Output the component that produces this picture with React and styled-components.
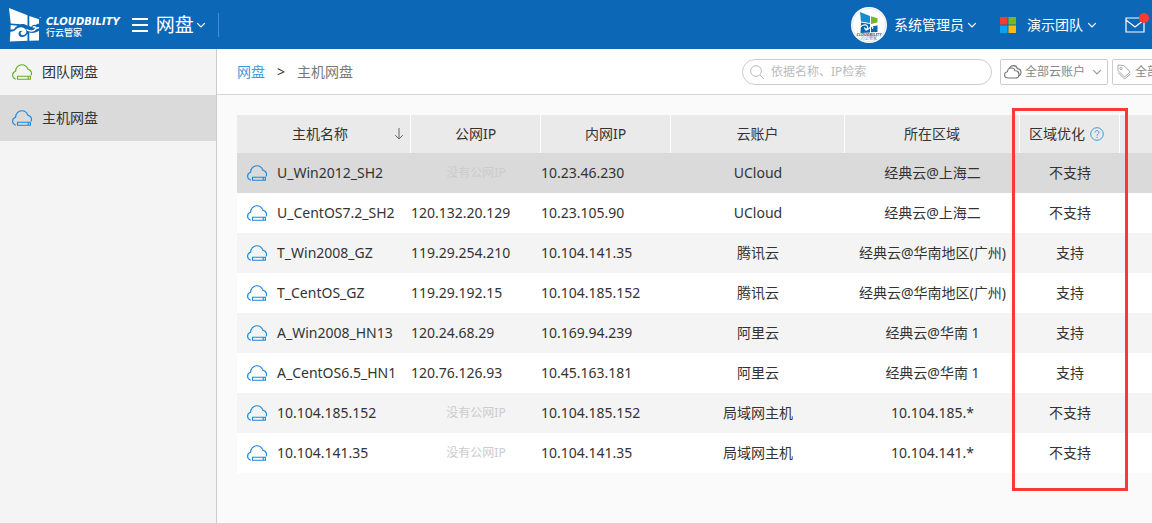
import React from 'react';
import styled, { createGlobalStyle } from 'styled-components';

const GlobalStyles = createGlobalStyle`
  * {
    box-sizing: border-box;
  }
  body {
    margin: 0;
    background: #fafafa;
    color: #333;
    font-family: 'Noto Sans', 'Noto Sans CJK SC', sans-serif;
    font-size: 14px;
    line-height: 20px;
  }
  button, input, select {
    font: inherit;
    color: inherit;
  }
  button {
    padding: 0;
    border: 0;
    background: none;
  }
  a {
    color: inherit;
    text-decoration: none;
  }
  svg {
    flex: none;
    display: block;
    fill: none;
    stroke: currentColor;
  }
  svg.solid {
    stroke: none;
  }
`;

const Page = styled.div`
  min-height: 100vh;
  display: flex;
  flex-direction: column;
  overflow: hidden;
`;

const Header = styled.header`
  height: 49px;
  padding: 0 3px 0 8px;
  display: flex;
  align-items: center;
  background: #0c67b7;
  color: white;
`;

const Brand = styled.a`
  display: flex;
  align-items: center;
  gap: 5px;
`;

const BrandText = styled.span`
  display: flex;
  flex-direction: column;
  padding-top: 6px;
  .latin {
    font-family: 'DejaVu Sans', sans-serif;
    font-size: 10px;
    font-style: italic;
    font-weight: 700;
    line-height: 10px;
  }
  .chinese {
    font-size: 9px;
    font-weight: 500;
    line-height: 12px;
  }
`;

const ModuleButton = styled.button`
  height: 24px;
  margin-left: 12px;
  padding-right: 12px;
  display: flex;
  align-items: center;
  border-right: 1px solid #4a90d0;
  font-size: 19px;
  span {
    margin: 0 2px 0 8px;
  }
`;

const HeaderActions = styled.div`
  margin-left: auto;
  display: flex;
  align-items: center;
`;

const MenuButton = styled.button`
  display: flex;
  align-items: center;
  gap: ${(props) => props.$gap};
  margin-right: ${(props) => props.$space};
  .arrow {
    margin-left: ${(props) => props.$arrow};
  }
`;

const MailButton = styled.button`
  position: relative;
  padding-right: 4px;
  .dot {
    position: absolute;
    top: -4px;
    right: 0;
    width: 10px;
    height: 10px;
    border-radius: 50%;
    background: #ff3b30;
  }
`;

const Body = styled.div`
  flex: 1;
  min-width: 1240px;
  display: flex;
`;

const Sidebar = styled.nav`
  width: 217px;
  flex: none;
  border-right: 1px solid #ccc;
  background: #f4f4f4;
`;

const SideLink = styled.a`
  height: 46px;
  padding-left: 12px;
  display: flex;
  align-items: center;
  gap: 10px;
  background: ${(props) => (props.$active ? '#dadada' : 'transparent')};
  svg {
    color: ${(props) => props.$color};
  }
`;

const Main = styled.main`
  flex: 1;
`;

const Toolbar = styled.div`
  height: 46px;
  padding: 0 20px;
  display: flex;
  align-items: center;
  border-bottom: 1px solid #d6d6d6;
  background: white;
`;

const Breadcrumb = styled.div`
  flex: 1;
  display: flex;
  gap: 12px;
  color: #777;
  a {
    color: #429ade;
  }
  .separator {
    color: #333;
  }
`;

const Search = styled.label`
  width: 250px;
  height: 26px;
  margin-right: 8px;
  padding: 0 7px;
  display: flex;
  align-items: center;
  gap: 7px;
  border: 1px solid #ccc;
  border-radius: 13px;
  color: #bbb;
  font-size: 12px;
  input {
    flex: 1;
    min-width: 0;
    padding: 0;
    border: 0;
    outline: 0;
    background: none;
  }
  input::placeholder {
    color: #bbb;
  }
`;

const Filter = styled.label`
  width: 108px;
  height: 26px;
  margin-right: ${(props) => props.$space || '0'};
  padding: 0 5px 0 3px;
  display: flex;
  align-items: center;
  gap: 3px;
  border: 1px solid #ccc;
  border-radius: 2px;
  color: ${(props) => props.$color};
  font-size: 12px;
  select {
    flex: 1;
    min-width: 0;
    padding: 0;
    appearance: none;
    border: 0;
    outline: 0;
    background: none;
    color: #888;
  }
  .arrow {
    color: #999;
  }
`;

const TableArea = styled.div`
  position: relative;
  margin: 20px 0 0 20px;
`;

const HostTable = styled.table`
  width: 100%;
  table-layout: fixed;
  border-collapse: separate;
  border-spacing: 0;
  white-space: nowrap;
  th, td {
    padding: 0;
    font-weight: 400;
    text-align: center;
  }
  th {
    height: 38px;
    background: #eaeaea;
    border-right: 1px solid white;
  }
`;

const HeadCell = styled.div`
  display: flex;
  align-items: center;
  justify-content: center;
  gap: 5px;
  padding-right: 6px;
  svg {
    color: ${(props) => props.$color};
  }
  span {
    flex: ${(props) => (props.$fill ? 1 : 'none')};
    padding-left: ${(props) => (props.$fill ? '14px' : 0)};
  }
`;

const HostRow = styled.tr`
  height: 40px;
  background: ${(props) => (props.$selected ? '#dadada' : 'white')};
  &:nth-child(odd) {
    background: ${(props) => (props.$selected ? '#dadada' : '#f4f4f4')};
  }
  td.ip {
    text-align: left;
  }
`;

const HostName = styled.div`
  padding-left: 10px;
  display: flex;
  align-items: center;
  gap: 10px;
  svg {
    color: #1b87dc;
  }
`;

const NoIp = styled.div`
  color: #ccc;
  font-size: 12px;
  text-align: center;
`;

const HelpButton = styled.button`
  color: #429ade;
`;

const Highlight = styled.div`
  position: absolute;
  top: -7px;
  bottom: -18px;
  left: 775px;
  width: 116px;
  border: 3px solid #fa3838;
  pointer-events: none;
`;

function CloudDisk() {
  return (
    <svg width="20" height="16" viewBox="0 0 20 16" strokeWidth="1.1" strokeLinecap="round">
      <path d="M3.4 15C1.700 14.300.6 12.900.6 11.200c0-2 1.200-3.400 3-3.900C3.700 3.700 6.300.8 9.800.8c2.800 0 5 1.600 6 4.300 2.200.6 3.700 2.300 3.700 4.400 0 .6-.1 1-.3 1.500" />
      <path d="M5.500 12.200h12.900v3H5.500zM16.200 12.400v2.600" />
    </svg>
  );
}

function Chevron() {
  return (
    <svg className="arrow" width="10" height="10" viewBox="0 0 10 10" strokeWidth="1.2">
      <path d="M1.200 3.200L5 7l3.800-3.800" />
    </svg>
  );
}

function Logo() {
  return (
    <svg className="solid" width="33" height="34" viewBox="0 0 33 34">
      <path fill="white" d="M1 0l18.500 7.300v10.500c-2-1.500-4.500-2-6.800-1.500L2.700 15.500z" />
      <path fill="white" d="M21.300 8l9.700 3.200v4.500c-1.800-.3-2.500.5-3.500 1.400-1.700-1-3.600.2-4.200 1.800l-2-1z" />
      <path fill="white" d="M2.700 17l7 .8c-1.700.8-3 2-3.700 3.500l-3.500.3z" />
      <path fill="white" d="M2.400 23.700c2.500-.2 4-.6 5.200-2 1.800-2.200 5-3.300 7.800-2 3.300 1.500 4 5 1.500 6.800-1.800 1.300-4.300.5-4.300-1.300 0-1.200 1-1.900 2-1.600-.8-1.200-3-.9-3.800.8-1 2.200.8 4.600 3.500 4.600 2.300 0 4-1.300 5.200-3.200v7L1.800 33.400z" />
      <path fill="white" d="M21.300 24.600c3 1 6.200.3 9.700-1.800v9.700l-9.700.3z" />
      <path stroke="white" strokeWidth="1.500" d="M18.500 21.500c3 2.200 8 2 9-.7.7-1.900-1.800-3-2.500-1.300M27.500 21c1.200-.8 2.200-1.300 3.500-1.200" />
      <circle cx="32.200" cy="9.500" r=".6" fill="white" />
    </svg>
  );
}

function Avatar() {
  return (
    <svg className="solid" width="36" height="36" viewBox="0 0 36 36">
      <circle cx="18" cy="18" r="18" fill="white" />
      <circle cx="18" cy="18" r="16.500" stroke="#cdd9e3" strokeWidth=".6" />
      <path fill="#168bd0" d="M9 5l10 4v7L10 14.500z" />
      <path fill="#75b52a" d="M20 9.300l6.500 2v4.200L20 17z" />
      <path fill="#0b66ad" d="M10 15.500l9 1.500v8.500l-9.500.5z" />
      <path fill="#0b66ad" d="M20 19.500l6.500-1.200V25l-6.500.3z" />
      <path stroke="white" strokeWidth="1.200" d="M9 20.500c3.500-4.500 8.500-2.500 7.500.5-.7 2-3.500 1.200-2.700-.4M14.500 23c3 .5 4-3 6-3.500 1.500-.3 2 1.500.5 1.800" />
      <path stroke="white" strokeWidth="1.200" d="M20 17.300c2 1.800 5.500 1 6.800-.6" />
      <text x="18" y="29" fill="#44505c" fontSize="4" fontWeight="700" fontStyle="italic" textAnchor="middle">CLOUDBILITY</text>
      <text x="18" y="33" fill="#6d7680" fontSize="4" textAnchor="middle">行云管家</text>
    </svg>
  );
}

const hosts = [
  { name: 'U_Win2012_SH2', lan: '10.23.46.230', account: 'UCloud', region: '经典云@上海二', boost: false },
  { name: 'U_CentOS7.2_SH2', wan: '120.132.20.129', lan: '10.23.105.90', account: 'UCloud', region: '经典云@上海二', boost: false },
  { name: 'T_Win2008_GZ', wan: '119.29.254.210', lan: '10.104.141.35', account: '腾讯云', region: '经典云@华南地区(广州)', boost: true },
  { name: 'T_CentOS_GZ', wan: '119.29.192.15', lan: '10.104.185.152', account: '腾讯云', region: '经典云@华南地区(广州)', boost: true },
  { name: 'A_Win2008_HN13', wan: '120.24.68.29', lan: '10.169.94.239', account: '阿里云', region: '经典云@华南 1', boost: true },
  { name: 'A_CentOS6.5_HN1', wan: '120.76.126.93', lan: '10.45.163.181', account: '阿里云', region: '经典云@华南 1', boost: true },
  { name: '10.104.185.152', lan: '10.104.185.152', account: '局域网主机', region: '10.104.185.*', boost: false },
  { name: '10.104.141.35', lan: '10.104.141.35', account: '局域网主机', region: '10.104.141.*', boost: false },
];

const columnWidths = [174, 130, 130, 174, 175, 100];

export default function App() {
  return (
    <Page>
      <GlobalStyles />
      <Header>
        <Brand href="#">
          <Logo />
          <BrandText>
            <span className="latin">CLOUDBILITY</span>
            <span className="chinese">行云管家</span>
          </BrandText>
        </Brand>
        <ModuleButton>
          <svg width="16" height="14" viewBox="0 0 16 14" strokeWidth="2">
            <path d="M0 1h16M0 7h16M0 13h16" />
          </svg>
          <span>网盘</span>
          <Chevron />
        </ModuleButton>
        <HeaderActions>
          <MenuButton $gap="7px" $arrow="-4px" $space="23px">
            <Avatar />
            <span>系统管理员</span>
            <Chevron />
          </MenuButton>
          <MenuButton $gap="11px" $arrow="-7px" $space="28px">
            <svg className="solid" width="16" height="16" viewBox="0 0 16 16">
              <path fill="#fb3d26" d="M0 0h7.500v7.500H0z" />
              <path fill="#74ba1f" d="M8.500 0H16v7.500H8.500z" />
              <path fill="#06a5ee" d="M0 8.500h7.500V16H0z" />
              <path fill="#fdb813" d="M8.500 8.500H16V16H8.500z" />
            </svg>
            <span>演示团队</span>
            <Chevron />
          </MenuButton>
          <MailButton aria-label="消息">
            <svg width="20" height="16" viewBox="0 0 20 16" strokeWidth="1.200">
              <path d="M1 1h18v14H1zM1 3l9 7 9-7" />
            </svg>
            <span className="dot" />
          </MailButton>
        </HeaderActions>
      </Header>
      <Body>
        <Sidebar>
          <SideLink href="#team" $color="#62b01e">
            <CloudDisk />
            团队网盘
          </SideLink>
          <SideLink href="#host" $color="#1b87dc" $active>
            <CloudDisk />
            主机网盘
          </SideLink>
        </Sidebar>
        <Main>
          <Toolbar>
            <Breadcrumb>
              <a href="#disk">网盘</a>
              <span className="separator">&gt;</span>
              <span>主机网盘</span>
            </Breadcrumb>
            <Search>
              <svg width="14" height="14" viewBox="0 0 14 14">
                <circle cx="6" cy="6" r="5.400" />
                <path d="M10 10l4 4" />
              </svg>
              <input type="text" aria-label="搜索" placeholder="依据名称、IP检索" />
            </Search>
            <Filter $space="4px" $color="#777">
              <svg width="18" height="14" viewBox="0 0 18 14" strokeWidth="1.100">
                <path d="M4 13C2 13 .6 11.800.6 10s1.200-3 2.800-3.200C3.600 4.500 5.200 3 7.300 3c1.900 0 3.300 1 3.900 2.800 2.200 0 3.800 1.500 3.800 3.600S13.500 13 11.500 13z" />
                <path d="M5.500 3.300C6.300 1.500 7.700.6 9.400.6c2 0 3.500 1.200 4 3 2 .2 3.600 1.800 3.600 3.800 0 1.500-.8 2.700-2 3.300" />
              </svg>
              <select aria-label="云账户">
                <option>全部云账户</option>
              </select>
              <Chevron />
            </Filter>
            <Filter $color="#aaa">
              <svg width="16" height="16" viewBox="0 0 16 16">
                <path d="M2 1l6 .5 6 6.500-5.500 5L2 6.500zM2 8.500L8.500 15l6-5" />
                <circle cx="5" cy="4.500" r="1.200" />
              </svg>
              <select aria-label="标签">
                <option>全部标签</option>
              </select>
              <Chevron />
            </Filter>
          </Toolbar>
          <TableArea>
            <HostTable>
              <colgroup>
                {columnWidths.map((width, i) => (
                  <col key={i} width={width} />
                ))}
                <col />
              </colgroup>
              <thead>
                <tr>
                  <th>
                    <HeadCell $fill $color="#666">
                      <span>主机名称</span>
                      <svg width="10" height="12" viewBox="0 0 10 12">
                        <path d="M5 0v11M1.200 7.200L5 11l3.800-3.800" />
                      </svg>
                    </HeadCell>
                  </th>
                  <th>公网IP</th>
                  <th>内网IP</th>
                  <th>云账户</th>
                  <th>所在区域</th>
                  <th>
                    <HeadCell $color="#429ade">
                      <span>区域优化</span>
                      <HelpButton aria-label="帮助">
                        <svg width="14" height="14" viewBox="0 0 14 14">
                          <circle cx="7" cy="7" r="6.300" />
                          <path d="M5 5.500c0-2.600 4-2.600 4 0C9 7 7 7 7 8.800M7 9.800v1.200" />
                        </svg>
                      </HelpButton>
                    </HeadCell>
                  </th>
                  <th aria-label="操作" />
                </tr>
              </thead>
              <tbody>
                {hosts.map((host, i) => (
                  <HostRow key={host.name} $selected={i === 0}>
                    <td>
                      <HostName>
                        <CloudDisk />
                        {host.name}
                      </HostName>
                    </td>
                    <td className="ip">{host.wan || <NoIp>没有公网IP</NoIp>}</td>
                    <td className="ip">{host.lan}</td>
                    <td>{host.account}</td>
                    <td>{host.region}</td>
                    <td>{host.boost ? '支持' : '不支持'}</td>
                    <td />
                  </HostRow>
                ))}
              </tbody>
            </HostTable>
            <Highlight />
          </TableArea>
        </Main>
      </Body>
    </Page>
  );
}
